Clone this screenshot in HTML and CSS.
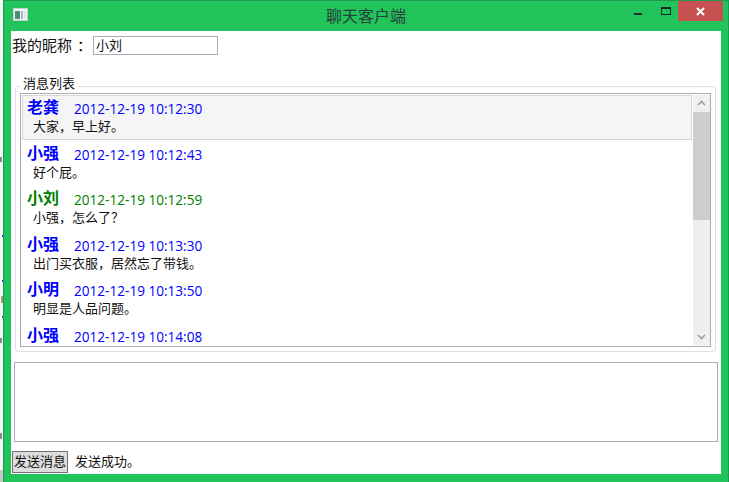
FILE: index.html
```html
<!DOCTYPE html>
<html lang="zh">
<head>
<meta charset="utf-8">
<title>聊天客户端</title>
<link rel="stylesheet" href="styles.css">
</head>
<body>
<div class="window">
  <div class="titlebar">
    <svg class="app-icon" width="15" height="13" viewBox="0 0 15 13">
      <rect x="0.5" y="0.5" width="14" height="12" fill="#f1f4f4" stroke="#c4d0cc"/>
      <rect x="2" y="3" width="5" height="8" fill="#4d8a80"/>
      <rect x="8" y="3" width="2" height="8" fill="#a9bcc0"/>
      <rect x="11" y="3" width="2" height="8" fill="#dfe6e8"/>
    </svg>
    <div class="title">聊天客户端</div>
    <div class="controls">
      <div class="ctl"><span class="min"></span></div>
      <div class="ctl"><span class="max"></span></div>
      <div class="close">
        <svg width="9" height="9" viewBox="0 0 9 9"><path d="M1 1L8 8M8 1L1 8" stroke="#fff" stroke-width="2"/></svg>
      </div>
    </div>
  </div>
  <div class="content">
    <div class="nick-row">
      <span class="nick-label">我的昵称<span class="colon">：</span></span>
      <div class="input">小刘</div>
    </div>
    <div class="group">
      <div class="legend">消息列表</div>
      <div class="list">
        <div class="items">
          <div class="item selected">
            <div class="head blue"><b>老龚</b><span>2012-12-19 10:12:30</span></div>
            <div class="msg">大家，早上好。</div>
          </div>
          <div class="item">
            <div class="head blue"><b>小强</b><span>2012-12-19 10:12:43</span></div>
            <div class="msg">好个屁。</div>
          </div>
          <div class="item">
            <div class="head green"><b>小刘</b><span>2012-12-19 10:12:59</span></div>
            <div class="msg">小强，怎么了？</div>
          </div>
          <div class="item">
            <div class="head blue"><b>小强</b><span>2012-12-19 10:13:30</span></div>
            <div class="msg">出门买衣服，居然忘了带钱。</div>
          </div>
          <div class="item">
            <div class="head blue"><b>小明</b><span>2012-12-19 10:13:50</span></div>
            <div class="msg">明显是人品问题。</div>
          </div>
          <div class="item">
            <div class="head blue"><b>小强</b><span>2012-12-19 10:14:08</span></div>
          </div>
        </div>
        <div class="scrollbar">
          <svg class="arrow" width="17" height="17" viewBox="0 0 17 17"><path d="M5 10L8.5 6.5L12 10" fill="none" stroke="#a0a0a0" stroke-width="1.6"/></svg>
          <div class="thumb"></div>
          <div class="track"></div>
          <svg class="arrow" width="17" height="17" viewBox="0 0 17 17"><path d="M5 7L8.5 10.5L12 7" fill="none" stroke="#a0a0a0" stroke-width="1.6"/></svg>
        </div>
      </div>
    </div>
    <div class="textarea"></div>
    <div class="send-row">
      <div class="button">发送消息</div>
      <span class="status">发送成功。</span>
    </div>
  </div>
</div>
</body>
</html>
```
FILE: styles.css
```css
html, body {
  margin: 0;
  padding: 0;
}
body {
  width: 729px;
  height: 482px;
  overflow: hidden;
  background-color: #f4f6f8;
  background-image:
    linear-gradient(#c8c8c8, #c8c8c8),
    linear-gradient(#8a8a8a, #8a8a8a),
    linear-gradient(#8a8a8a, #8a8a8a),
    linear-gradient(#1a8a5a, #1a8a5a),
    linear-gradient(#b09a80, #b09a80),
    linear-gradient(#2233ee, #2233ee),
    linear-gradient(#2233ee, #2233ee),
    linear-gradient(#8a8a8a, #8a8a8a);
  background-repeat: no-repeat;
  background-size: 3px 12px, 2px 6px, 2px 5px, 1px 2px, 2px 7px, 1px 2px, 1px 2px, 2px 5px;
  background-position: 0 470px, 0 433px, 0 338px, 2px 316px, 1px 296px, 2px 280px, 2px 235px, 0 157px;
  font-family: "Noto Sans CJK SC", "Noto Sans", sans-serif;
  font-size: 13px;
  color: #111;
}
.window {
  box-sizing: border-box;
  width: 726px;
  height: 482px;
  margin-left: 3px;
  background: #21c45a;
  border: 1px solid #1f9a50;
  border-bottom: 0;
  display: flex;
  flex-direction: column;
}
.titlebar {
  height: 30px;
  flex: none;
  display: flex;
  align-items: flex-start;
  position: relative;
}
.app-icon {
  margin: 7px 0 0 9px;
}
.title {
  position: absolute;
  left: 0;
  right: 0;
  top: 3px;
  text-align: center;
  font-size: 16px;
  line-height: 22px;
  color: #26403a;
}
.controls {
  margin-left: auto;
  margin-right: 5px;
  display: flex;
}
.ctl {
  width: 26px;
  height: 20px;
  position: relative;
}
.min {
  position: absolute;
  left: 7px;
  top: 12px;
  width: 8px;
  height: 2px;
  background: #1c2b30;
}
.max {
  position: absolute;
  left: 8px;
  top: 6px;
  box-sizing: border-box;
  width: 10px;
  height: 8px;
  border: 1px solid #1c2b30;
  border-top-width: 2px;
}
.close {
  width: 45px;
  height: 20px;
  background: #c75050;
  display: flex;
  align-items: center;
  justify-content: center;
  margin-left: -1px;
}
.content {
  box-sizing: border-box;
  width: 710px;
  height: 443px;
  margin-left: 7px;
  background: #fff;
  padding: 5px 3px 0 1px;
  display: flex;
  flex-direction: column;
}
.nick-row {
  display: flex;
  align-items: flex-start;
  height: 19px;
}
.nick-label {
  font-size: 15px;
  line-height: 19px;
  width: 81px;
  flex: none;
  margin-top: -1px;
  white-space: nowrap;
}
.colon {
  padding-left: 5px;
}
.input {
  box-sizing: border-box;
  width: 125px;
  height: 19px;
  border: 1px solid #abadb3;
  padding-left: 2px;
  font-size: 13px;
  line-height: 15px;
}
.group {
  box-sizing: border-box;
  position: relative;
  width: 701px;
  height: 266px;
  margin: 31px 0 0 3px;
  border: 1px solid #d9e0e8;
  border-radius: 3px;
  padding: 6px 4px 4px;
}
.legend {
  position: absolute;
  left: 4px;
  top: -12px;
  padding: 0 3px;
  background: #fff;
  font-size: 13px;
  line-height: 16px;
}
.list {
  box-sizing: border-box;
  height: 254px;
  border: 1px solid #abadb3;
  display: flex;
  padding: 1px 0 0 1px;
}
.items {
  flex: 1;
  min-width: 0;
  height: 251px;
  overflow: hidden;
}
.item {
  box-sizing: border-box;
  height: 45.6px;
  padding: 0 0 0 4px;
  border: 1px solid transparent;
}
.item.selected {
  height: 45px;
  margin-bottom: 0.6px;
  background: #f5f5f5;
  border-color: #d6d6d6;
}
.head {
  display: flex;
  align-items: baseline;
  height: 21px;
  line-height: 22px;
}
.head b {
  width: 47px;
  flex: none;
  font-size: 16px;
  font-weight: 700;
  transform: translateY(-1px);
}
.head span {
  font-family: "Open Sans", sans-serif;
  font-size: 13.6px;
}
.blue { color: #0000ff; }
.green { color: #008000; }
.msg {
  padding-left: 6px;
  font-size: 13px;
  line-height: 17px;
  color: #111;
}
.scrollbar {
  width: 17px;
  flex: none;
  margin: 0 0 1px 1px;
  background: #eeeeee;
  display: flex;
  flex-direction: column;
}
.arrow {
  flex: none;
  background: #f0f0f0;
}
.thumb {
  height: 108px;
  flex: none;
  background: #cdcdcd;
}
.track {
  flex: 1;
}
.textarea {
  box-sizing: border-box;
  width: 704px;
  height: 80px;
  margin: 10px 0 0 2px;
  border: 1px solid #abadb3;
}
.send-row {
  display: flex;
  align-items: flex-start;
  margin-top: 9px;
  height: 22px;
}
.button {
  box-sizing: border-box;
  width: 56px;
  height: 22px;
  border: 1px solid #707070;
  background: #dddddd;
  text-align: center;
  font-size: 13px;
  line-height: 18px;
}
.status {
  margin-left: 7px;
  font-size: 13px;
  line-height: 20px;
}
```
